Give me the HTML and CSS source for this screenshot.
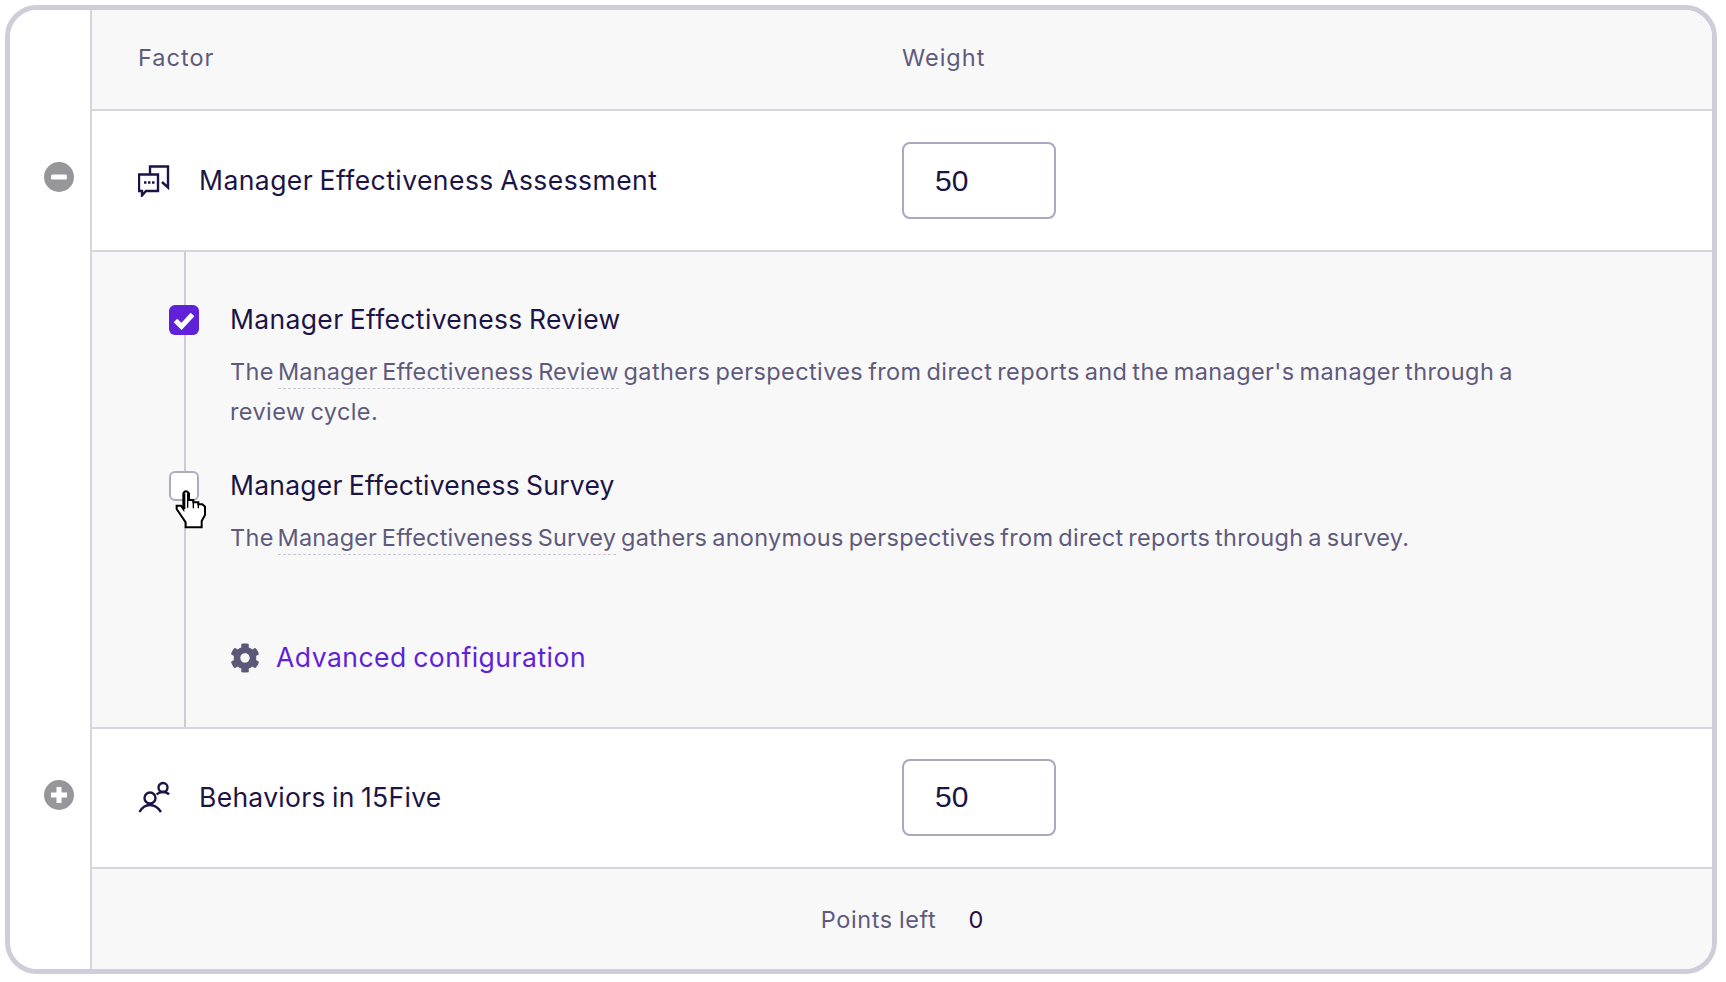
FILE: index.html
```html
<!DOCTYPE html>
<html lang="en">
<head>
<meta charset="utf-8">
<title>Factors</title>
<link rel="stylesheet" href="styles.css">
</head>
<body>
<div class="card">
  <div class="row row-head">
    <div class="gutter"></div>
    <div class="cells head">
      <div class="factor">Factor</div>
      <div class="weight">Weight</div>
    </div>
  </div>
  <div class="row row-factor">
    <div class="gutter">
      <svg class="toggle toggle-a" viewBox="0 0 30 30"><circle cx="15" cy="15" r="15" fill="#97979b"/><rect x="7" y="12.5" width="16" height="5" rx="1.5" fill="#fff"/></svg>
    </div>
    <div class="cells">
      <div class="factor">
        <svg class="ficon" viewBox="0 0 32 32" fill="none" stroke="#1c1445" stroke-width="2.4"><path d="M12 9V1.500H30V22.500L24 17"/><path d="M1 9.500H20V26H8L4 30.500V26H1z" fill="#fff"/><path d="M6 17.500h2.500M10 17.500h2.500M14 17.500h2.500" stroke-width="2.400"/></svg>
        <span class="fname fname-a">Manager Effectiveness Assessment</span>
      </div>
      <div class="weight"><div class="field">50</div></div>
    </div>
  </div>
  <div class="row row-sub">
    <div class="gutter"></div>
    <div class="sub">
      <div class="opt opt-first">
        <div class="box box-on"><svg viewBox="0 0 30 30"><path d="M6.500 15.500L12.500 21.500L23.500 9.500" fill="none" stroke="#fff" stroke-width="5"/></svg></div>
        <div class="opt-title">Manager Effectiveness Review</div>
        <p class="opt-desc">The <span class="term">Manager Effectiveness Review</span> gathers perspectives from direct reports and the manager's manager through a review cycle.</p>
      </div>
      <div class="opt opt-second">
        <div class="box"></div>
        <div class="opt-title opt-title-b">Manager Effectiveness Survey</div>
        <p class="opt-desc opt-desc-b">The <span class="term">Manager Effectiveness Survey</span> gathers anonymous perspectives from direct reports through a survey.</p>
        <svg class="pointer" viewBox="0 0 150 210"><path d="M55 85Q62 73 72 85V105H85V112H100V118H112L120 125V150L110 168V187H62V172L35 132V122H48L55 132Z" fill="#fff" stroke="#000" stroke-width="6"/><path d="M59 85V132M68 85V128M85 108V130M100 114V130" fill="none" stroke="#000" stroke-width="4"/></svg>
      </div>
      <div class="adv">
        <svg class="gear" viewBox="0 0 512 512"><path fill="#5c5878" d="M487.400 315.700l-42.600-24.600c4.300-23.200 4.300-47 0-70.200l42.600-24.600c4.900-2.800 7.100-8.600 5.500-14-11.100-35.600-30-67.800-54.700-94.600-3.800-4.100-10-5.100-14.800-2.300L380.800 110c-17.900-15.400-38.500-27.300-60.800-35.100V25.800c0-5.600-3.900-10.500-9.400-11.700-36.700-8.200-74.300-7.800-109.200 0-5.500 1.200-9.400 6.100-9.400 11.700V75c-22.200 7.900-42.800 19.800-60.800 35.100L88.700 85.500c-4.900-2.800-11-1.900-14.800 2.300-24.700 26.700-43.600 58.900-54.700 94.600-1.700 5.400.6 11.200 5.500 14L67.300 221c-4.300 23.200-4.300 47 0 70.200l-42.600 24.600c-4.900 2.800-7.100 8.600-5.500 14 11.100 35.600 30 67.800 54.700 94.600 3.800 4.100 10 5.100 14.800 2.300l42.600-24.600c17.900 15.400 38.500 27.300 60.800 35.100v49.200c0 5.600 3.900 10.500 9.400 11.700 36.700 8.200 74.300 7.800 109.200 0 5.500-1.200 9.400-6.100 9.400-11.700v-49.200c22.200-7.900 42.800-19.800 60.800-35.100l42.600 24.600c4.900 2.800 11 1.900 14.800-2.300 24.700-26.700 43.600-58.900 54.700-94.600 1.500-5.500-.7-11.300-5.600-14.100zM256 336c-44.100 0-80-35.900-80-80s35.900-80 80-80 80 35.900 80 80-35.900 80-80 80z"/></svg>
        <span class="adv-link">Advanced configuration</span>
      </div>
    </div>
  </div>
  <div class="row row-factor row-factor-b">
    <div class="gutter">
      <svg class="toggle toggle-b" viewBox="0 0 30 30"><circle cx="15" cy="15" r="15" fill="#97979b"/><path d="M12.500 7h5v5.500H23v5h-5.500V23h-5v-5.500H7v-5h5.500z" fill="#fff"/></svg>
    </div>
    <div class="cells">
      <div class="factor">
        <svg class="ficon" viewBox="0 0 32 32" fill="none" stroke="#1c1445" stroke-width="2.4"><circle cx="12" cy="17" r="5.500"/><path d="M1.500 31C4 26.500 8 24 12 24S20 26.500 23 31"/><circle cx="25" cy="6.500" r="4.500"/><path d="M18.500 13.500c2-2 4-2.500 6.500-2.500s4.500.5 6 2.500"/></svg>
        <span class="fname fname-b">Behaviors in 15Five</span>
      </div>
      <div class="weight"><div class="field">50</div></div>
    </div>
  </div>
  <div class="row row-foot">
    <div class="gutter"></div>
    <div class="foot"><span class="foot-label">Points left</span><span class="foot-val">0</span></div>
  </div>
</div>
</body>
</html>
```
FILE: styles.css
```css
* { box-sizing: border-box; }
html, body { margin: 0; height: 100%; background: #fff; }
body { padding: 5px 9px 8px 5px; font-family: Inter, "Liberation Sans", sans-serif; color: #1c1445; }
.card { border: 5px solid #cfcdd9; border-radius: 32px; overflow: hidden; height: 969px; display: flex; flex-direction: column; background: #fff; }
.row { display: flex; }
.row:last-child { flex: 1; }
.gutter { width: 82px; flex: none; background: #fff; border-right: 2px solid #d6d5df; display: flex; justify-content: flex-end; align-items: center; padding-right: 16px; }
.row-head { height: 101px; }
.row-factor { height: 141px; }
.row-factor-b { height: 140px; }
.row-factor-b .cells { padding-bottom: 2px; }
.row-sub { height: 477px; }
.cells, .sub { border-bottom: 2px solid #d6d5df; }
.head, .sub, .foot { background: #f8f8f8; }
.cells { flex: 1; display: flex; align-items: center; padding-left: 46px; }
.factor { width: 764px; flex: none; display: flex; align-items: center; }
.head { color: #5f5a7c; font-size: 23.500px; letter-spacing: 1px; padding-bottom: 4px; }
.toggle { width: 30px; height: 30px; }
.toggle-a { margin-bottom: 9px; }
.toggle-b { margin-bottom: 9px; }
.ficon { width: 32px; height: 32px; margin-right: 29px; flex: none; }
.fname { font-size: 26.500px; word-spacing: -1.500px; white-space: nowrap; padding-bottom: 2px; }
.fname-a { letter-spacing: .45px; padding-bottom: 2px; }
.fname-b { letter-spacing: .3px; padding-bottom: 0; }
.field { width: 154px; height: 77px; border: 2px solid #a9a8bc; border-radius: 8px; background: #fff; padding-left: 31px; display: flex; align-items: center; font: 30px "Liberation Sans", sans-serif; }
.sub { flex: 1; position: relative; padding: 52px 0 0 138px; }
.sub::before { content: ""; position: absolute; left: 92px; top: 0; bottom: 0; width: 2px; background: #cdccd8; }
.opt { position: relative; width: 1300px; }
.opt-first { height: 166px; }
.opt-second { height: 171px; }
.box { position: absolute; left: -61px; top: 1px; width: 30px; height: 30px; border-radius: 6px; border: 2px solid #adacbf; background: #fff; }
.box svg { display: block; }
.box-on { background: #5f22d9; border: 0; }
.opt-title { font-size: 26.500px; line-height: 31px; letter-spacing: .35px; word-spacing: -1.500px; white-space: nowrap; }
.opt-title-b { letter-spacing: .22px; }
.opt-desc { margin: 17px 0 0; font-size: 23.500px; line-height: 40px; color: #5f5a7c; letter-spacing: .39px; word-spacing: -2px; }
.opt-desc-b { letter-spacing: .3px; }
.term { border-bottom: 1.500px dashed #c9c8d5; padding-bottom: 2px; letter-spacing: .15px; margin-left: -1px; }
.pointer { position: absolute; left: -65px; top: -5px; width: 50px; height: 70px; }
.adv { display: flex; align-items: center; }
.gear { width: 30px; height: 30px; margin-right: 16px; }
.adv-link { font-size: 26.500px; color: #5f22d9; letter-spacing: .5px; word-spacing: -1.500px; padding-bottom: 2px; }
.foot { flex: 1; display: flex; justify-content: center; align-items: center; gap: 32px; font-size: 23.500px; }
.foot-label { color: #5f5a7c; letter-spacing: .6px; word-spacing: -1px; }
```
